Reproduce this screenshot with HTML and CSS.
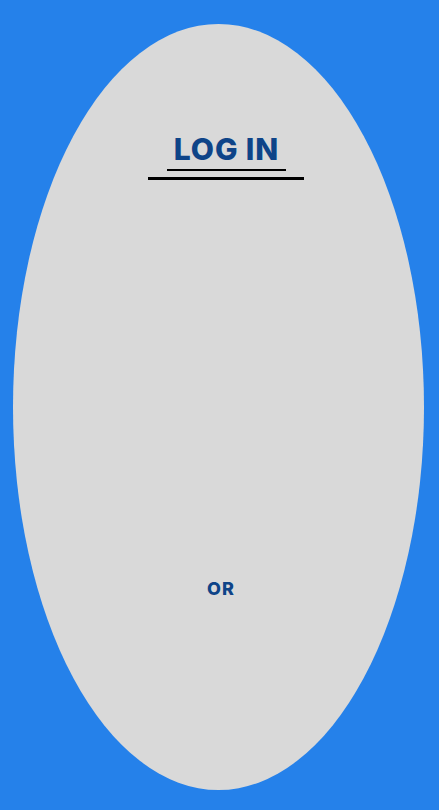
FILE: index.html
```html
<!DOCTYPE html>
<html>
<head>
<meta charset="utf-8">
<link rel="stylesheet" href="styles.css">
</head>
<body>
<div class="oval">
  <div class="title-wrap">
    <h1 class="title">LOG IN</h1>
  </div>
  <div class="or">OR</div>
</div>
</body>
</html>
```
FILE: styles.css
```css
html, body {
  margin: 0;
  padding: 0;
  background: #2581ea;
  height: 810px;
  overflow: hidden;
}
body {
  font-family: Inter, "Noto Sans", sans-serif;
}
.oval {
  margin: 24px 0 0 13px;
  width: 411px;
  height: 766px;
  border-radius: 50%;
  background: #d9d9d9;
  display: flex;
  flex-direction: column;
  align-items: flex-start;
  box-sizing: border-box;
  padding-top: 107px;
}
.title-wrap {
  margin-left: 135px;
  width: 156px;
  display: flex;
  justify-content: center;
  padding-bottom: 6px;
  border-bottom: 3px solid #000;
}
.title {
  margin: 0;
  padding: 0 0 2px 1px;
  width: 119px;
  box-sizing: border-box;
  text-align: center;
  font-size: 30px;
  line-height: 36px;
  font-weight: 800;
  letter-spacing: 0.9px;
  white-space: nowrap;
  color: #0e4488;
  border-bottom: 2px solid #000;
}
.or {
  margin: 398px 0 0 194px;
  font-size: 18px;
  line-height: 22px;
  font-weight: 800;
  letter-spacing: 1px;
  color: #0e4488;
}
```
